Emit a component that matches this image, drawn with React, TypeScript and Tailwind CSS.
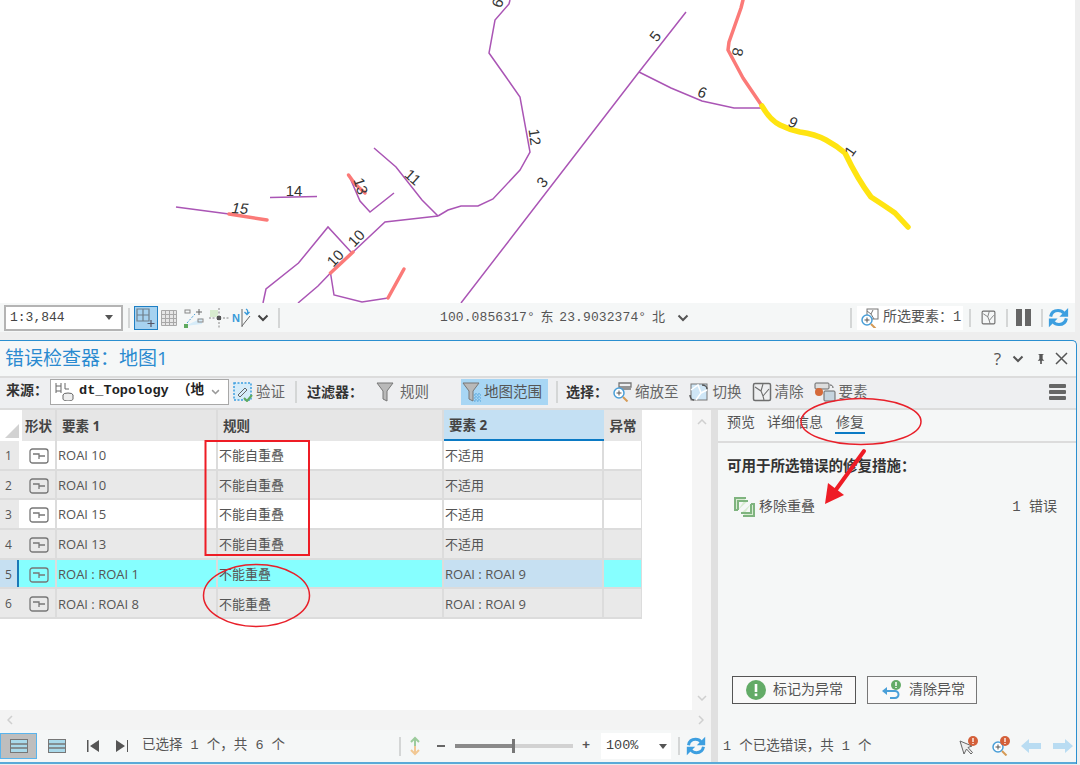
const mono = "font-['Liberation_Mono','Noto_Sans_CJK_SC',monospace]"

const purple = [
  '176,207 229,214',
  '270,197.5 317,196.5',
  '350,178 360,201 370,212 394,193',
  '374,148 396,167 422,200 438,216',
  '438,216 448,210 461,206 478,206 493,199 520,170 530,152 520,97 506,77 489,53 495,20 509,4 510,0',
  '438,216 385,222 353,252',
  '330.5,273 318,286 298,303',
  '351,252 328,227 298.5,263 266,289 263,303',
  '330.5,273 334,295 362,302 388,298',
  '686,12 639,72 461,303',
  '639,72 671,88 702,101 734,108 762,108',
]
const red = [
  '229,214 267,220',
  '348.5,175 355,184 365,193',
  '353,252 330.5,273',
  '388,298 404,269',
  '743,0 741,8 729,42 728,50 743,78 762,106',
]
const labels: [string, number, number, number, boolean?][] = [
  ['9', 498, 3, 110],
  ['12', 535, 137, 82],
  ['3', 542, 182, -50],
  ['5', 655, 36, -52],
  ['6', 702, 92, 10, true],
  ['8', 738, 52, 100],
  ['9', 793, 122, 15, true],
  ['1', 850, 151, -55],
  ['11', 413, 177, 42],
  ['13', 361, 186, 72],
  ['14', 294, 190, 0],
  ['15', 240, 208, 4, true],
  ['10', 356, 238, -46],
  ['10', 335, 258, -46],
]

function MapLines() {
  return (
    <svg className="absolute left-0 top-0 h-[303px] w-[1075px]" viewBox="0 0 1075 303">
      {purple.map((p) => (
        <polyline key={p} points={p} fill="none" stroke="#aa55b5" strokeWidth="1.5" />
      ))}
      {red.map((p) => (
        <polyline key={p} points={p} fill="none" stroke="#fb7a78" strokeWidth="3.5" strokeLinecap="round" strokeLinejoin="round" />
      ))}
      <path
        d="M762 106Q770 120 780 125T800 132Q815 134 826 140T845 153Q858 180 871 197Q885 206 895 213L908 227"
        fill="none"
        stroke="#ffe411"
        strokeWidth="5.5"
        strokeLinecap="round"
        strokeLinejoin="round"
      />
      {labels.map(([t, x, y, r, it]) => (
        <text
          key={t + x}
          x={x}
          y={y}
          transform={`rotate(${r} ${x} ${y})`}
          textAnchor="middle"
          dominantBaseline="central"
          fontSize="15"
          fontStyle={it ? 'italic' : 'normal'}
          fontFamily="'Liberation Sans', sans-serif"
          fill="#333"
        >
          {t}
        </text>
      ))}
    </svg>
  )
}

function Sep({ className = 'h-[22px]' }: { className?: string }) {
  return <span className={`w-[2px] shrink-0 bg-[#d4d6d6] ${className}`} />
}

function Caret() {
  return (
    <svg width="8" height="5" viewBox="0 0 8 5">
      <path d="M0 0h8L4 5z" fill="#555" />
    </svg>
  )
}

function Chevron({ color = '#555', w = 12 }: { color?: string; w?: number }) {
  return (
    <svg width={w} height={(w * 2) / 3} viewBox="0 0 12 8">
      <path d="M1.5 1.5 6 6l4.5-4.5" fill="none" stroke={color} strokeWidth="2" />
    </svg>
  )
}

function Refresh({ size = 24 }: { size?: number }) {
  return (
    <svg width={size} height={size} viewBox="0 0 24 24" fill="none" stroke="#3d9fe0" strokeWidth="3.6">
      <path d="M3 11c.8-4.500 4-7 8.500-7 3 0 5 1 6.500 3" />
      <path d="M21 13c-.8 4.500-4 7-8.500 7-3 0-5-1-6.500-3" />
      <path d="M23 1v10h-10z" fill="#3d9fe0" stroke="none" />
      <path d="M1 23v-10h10z" fill="#3d9fe0" stroke="none" />
    </svg>
  )
}

function Lens({ x = 0, y = 0 }: { x?: number; y?: number }) {
  return (
    <g transform={`translate(${x} ${y})`}>
      <circle cx="7" cy="7" r="5" fill="#fff" stroke="#4a9fd8" strokeWidth="1.5" />
      <path d="M4.500 7h5M7 4.500v5" stroke="#555" strokeWidth="1" />
      <path d="m11 11 4.500 4.500" stroke="#d59a55" strokeWidth="2" />
    </g>
  )
}

function FeatureBox({ s = 20 }: { s?: number }) {
  return (
    <svg width={s} height={s} viewBox="0 0 20 20" fill="none" stroke="#6e6e6e" strokeWidth="1.500">
      <rect x="1.500" y="1.500" width="17" height="17" rx="1.500" />
      <path d="M3 5 9 9 11 2M9 9l2 5 1 4M11 14l6-7" strokeWidth="1.100" />
    </svg>
  )
}

function MapToolbar() {
  return (
    <div className="flex h-[29px] items-center bg-[#f5f7f7]">
      <div className={`ml-1 flex h-[26px] w-[119px] items-center justify-between border-2 border-[#b4b4b4] bg-white pl-1 pr-2 text-[13px] text-[#444] ${mono}`}>
        1:3,844
        <Caret />
      </div>
      <Sep className="ml-[5px] h-[20px]" />
      <div className="ml-[4px] flex h-[24px] w-[24px] items-center justify-center border border-[#1e7fc4] bg-[#a6d2f0]">
        <svg width="20" height="20" viewBox="0 0 20 20" fill="none" stroke="#6f7f8a" strokeWidth="1.200">
          <path d="M1 1h12v12H1zM7 1v12M1 7h12" />
          <path d="M15 12v7M11.500 15.500h7" stroke="#556" />
        </svg>
      </div>
      <svg className="ml-[2px]" width="18" height="18" viewBox="0 0 18 18" fill="#e6e6e6" stroke="#a8a8a8">
        <path d="M1.500 1.500h15v15h-15zM1.500 5.500h15M1.500 9.500h15M1.500 13.500h15M5.500 1.500v15M9.500 1.500v15M13.500 1.500v15" />
      </svg>
      <svg className="ml-[6px]" width="20" height="20" viewBox="0 0 20 20" fill="none">
        <path d="M1 18 18 16V10" fill="#d6ecf9" />
        <rect x="1" y="2" width="5" height="3" stroke="#888" />
        <rect x="14" y="11" width="5" height="3" stroke="#888" />
        <path d="M3 15 11 6" stroke="#4a9fd8" strokeDasharray="2 1.500" />
        <path d="M15 1v6M12 4h6" stroke="#666" />
        <rect x="0" y="16" width="4" height="4" fill="#5faa5f" />
      </svg>
      <svg className="ml-[5px]" width="20" height="20" viewBox="0 0 20 20" fill="none">
        <rect x="1" y="2" width="8" height="7" fill="#d8eccf" />
        <path d="M10 0v20M0 10h20" stroke="#888" strokeDasharray="2 1.500" />
        <rect x="8" y="8" width="4" height="4" fill="#555" />
      </svg>
      <svg className="ml-[3px]" width="22" height="20" viewBox="0 0 22 20" fill="none">
        <text x="0" y="14" fontSize="11" fontWeight="700" fontFamily="'Liberation Sans', sans-serif" fill="#3a9ad9">
          N
        </text>
        <path d="M10 1v18M10 18l8-10" stroke="#666" />
        <path d="M14 1c2 1 2 3 1 5M12.500 4l2.500 2.500L17.500 4" stroke="#3a9ad9" strokeWidth="1.300" />
      </svg>
      <span className="ml-[3px] flex">
        <Chevron color="#444" />
      </span>
      <Sep className="ml-[9px] h-[20px]" />
      <div className={`ml-[160px] flex w-[225px] items-center justify-between text-[13px] tracking-[0.1px] text-[#555] ${mono}`}>
        <span>100.0856317°</span>
        <span>东</span>
        <span>23.9032374°</span>
        <span>北</span>
      </div>
      <span className="ml-[12px] flex">
        <Chevron />
      </span>
      <Sep className="ml-[161px] h-[20px]" />
      <div className={`ml-[5px] flex h-[24px] items-center gap-[4px] bg-white px-[2px] text-[14px] text-[#555] ${mono}`}>
        <svg width="20" height="20" viewBox="0 0 20 20" fill="none">
          <rect x="8" y="1" width="11" height="10" stroke="#777" fill="#fff" />
          <path d="m8 3 4 3 2-4M12 6l3 5" stroke="#777" />
          <Lens x={1} y={5} />
        </svg>
        <span>所选要素：1</span>
      </div>
      <Sep className="ml-[6px] h-[18px]" />
      <span className="ml-[10px] flex">
        <FeatureBox s={15} />
      </span>
      <Sep className="ml-[10px] h-[18px]" />
      <span className="ml-[8px] flex gap-[3px]">
        <span className="h-[17px] w-[6px] bg-[#666]" />
        <span className="h-[17px] w-[6px] bg-[#666]" />
      </span>
      <Sep className="ml-[10px] h-[18px]" />
      <span className="ml-[5px] flex">
        <Refresh size={21} />
      </span>
    </div>
  )
}

function ToolLabel({ children }: { children: string }) {
  return <span className={`text-[14px] font-bold text-[#333] ${mono}`}>{children}</span>
}

function ToolBtn({ icon, label, className = '' }: { icon: React.ReactNode; label: string; className?: string }) {
  return (
    <span className={`flex items-center gap-[3px] text-[14.500px] text-[#666] ${className}`}>
      {icon}
      <span>{label}</span>
    </span>
  )
}

function Funnel({ dotted = false }: { dotted?: boolean }) {
  return (
    <svg width="20" height="22" viewBox="0 0 20 22">
      <path d="M1 2h16l-6 8v10l-4-2v-8z" fill="#b9b9b9" stroke="#777" />
      {dotted && <path d="M12 14h7M12 17h7M12 20h7M14 12v9M17 12v9" stroke="#4a9fd8" strokeDasharray="1.500 1.500" />}
    </svg>
  )
}

function Toolbar() {
  return (
    <div className="flex h-[34px] items-center border-y-2 border-[#dcdcdc] bg-[#eeeff1] pb-[3px] pl-[6px]">
      <ToolLabel>来源：</ToolLabel>
      <div className="ml-[2px] flex h-[26px] w-[179px] items-center justify-between border border-[#a8a8a8] bg-white pl-[3px] pr-[8px]">
        <span className="flex items-center gap-[5px]">
          <svg width="20" height="20" viewBox="0 0 20 20" fill="none" stroke="#666">
            <path d="M2 2v10M7 2v10M2 5h5M2 10h5M11 2v6h4" />
            <ellipse cx="14" cy="14" rx="5" ry="2" fill="#eee" />
            <path d="M9 14v4c0 1 2 2 5 2s5-1 5-2v-4" fill="#eee" />
          </svg>
          <span className={`whitespace-pre text-[13.600px] font-bold text-[#222] ${mono}`}>dt_Topology （地</span>
        </span>
        <Chevron color="#999" w={9} />
      </div>
      <ToolBtn
        className="ml-[4px]"
        label="验证"
        icon={
          <svg width="20" height="20" viewBox="0 0 20 20" fill="none">
            <rect x="1" y="1" width="17" height="17" fill="#d6ecf9" stroke="#3d9fe0" strokeDasharray="2 1.500" strokeWidth="1.500" />
            <path d="m5 13 7-7 2 2-7 7z" stroke="#666" />
            <path d="m11 16 3 3 5-6" stroke="#5faa5f" strokeWidth="2" />
          </svg>
        }
      />
      <Sep className="ml-[10px] h-[22px]" />
      <span className="ml-[10px]">
        <ToolLabel>过滤器：</ToolLabel>
      </span>
      <ToolBtn className="ml-[13px] gap-[4px]" label="规则" icon={<Funnel />} />
      <span className="ml-[32px] flex h-[26px] w-[87px] items-center gap-[2px] bg-[#a8d6f4] pl-[1px] text-[14.500px] text-[#555]">
        <Funnel dotted />
        <span className="whitespace-nowrap">地图范围</span>
      </span>
      <Sep className="ml-[8px] h-[22px]" />
      <span className="ml-[8px]">
        <ToolLabel>选择：</ToolLabel>
      </span>
      <ToolBtn
        className="ml-[4px]"
        label="缩放至"
        icon={
          <svg width="20" height="20" viewBox="0 0 20 20" fill="none">
            <path d="M7 1h12v4H7zM7 7h12" stroke="#777" strokeWidth="1.300" />
            <Lens x={0} y={4} />
          </svg>
        }
      />
      <ToolBtn
        className="ml-[10px] gap-[4px]"
        label="切换"
        icon={
          <svg width="20" height="20" viewBox="0 0 20 20" fill="none">
            <rect x="2" y="2" width="16" height="16" fill="#cfe6f6" stroke="#777" />
            <path d="M2 8 9 3l3 8-5 7M12 11l6-3" stroke="#fff" strokeWidth="1.500" />
            <path d="M13 3c3 0 5 2 5 4M1 13c0 3 2 5 4 5" stroke="#555" strokeWidth="1.500" />
          </svg>
        }
      />
      <ToolBtn className="ml-[10px]" label="清除" icon={<FeatureBox />} />
      <ToolBtn
        className="ml-[10px] gap-[2px]"
        label="要素"
        icon={
          <svg width="22" height="20" viewBox="0 0 22 20" fill="none">
            <rect x="1" y="1" width="14" height="6" rx="1" fill="#ddd" stroke="#666" />
            <rect x="10" y="9" width="11" height="10" rx="1" fill="#c6d4de" stroke="#666" />
            <circle cx="5" cy="10" r="4" fill="#d56a3a" />
            <path d="M16 3c2 0 3 1 3 3" stroke="#555" />
          </svg>
        }
      />
      <span className="ml-auto mr-[10px] flex flex-col gap-[2px]">
        <span className="h-[4px] w-[17px] rounded-[1px] bg-[#666]" />
        <span className="h-[4px] w-[17px] rounded-[1px] bg-[#666]" />
        <span className="h-[4px] w-[17px] rounded-[1px] bg-[#666]" />
      </span>
    </div>
  )
}

function ShapeIcon() {
  return (
    <svg width="20" height="16" viewBox="0 0 20 16" fill="none" stroke="#777">
      <rect x="1" y="1" width="18" height="14" rx="2.500" strokeWidth="1.300" />
      <path d="M4 6h6v5M10 8h6" strokeWidth="1.300" />
    </svg>
  )
}

const rows = [
  { id: 1, a: 'ROAI 10', rule: '不能自重叠', b: '不适用', bg: 'bg-white' },
  { id: 2, a: 'ROAI 10', rule: '不能自重叠', b: '不适用', bg: 'bg-[#e9e9e9]' },
  { id: 3, a: 'ROAI 15', rule: '不能自重叠', b: '不适用', bg: 'bg-white' },
  { id: 4, a: 'ROAI 13', rule: '不能自重叠', b: '不适用', bg: 'bg-[#e9e9e9]' },
  { id: 5, a: 'ROAI : ROAI 1', rule: '不能重叠', b: 'ROAI : ROAI 9', bg: 'bg-[#86ffff]' },
  { id: 6, a: 'ROAI : ROAI 8', rule: '不能重叠', b: 'ROAI : ROAI 9', bg: 'bg-[#e9e9e9]' },
]

const headCell = 'flex h-full items-center border-r-2 border-[#dcdcdc] pt-[2px] text-[13.500px] font-bold text-[#444]'

function ErrorTable() {
  return (
    <div className="relative flex min-w-0 flex-1 flex-col">
      <div className="flex h-[31px] w-[642px] bg-[#e6e6e6]">
        <div className="flex w-[22px] items-end justify-end bg-white pb-[3px] pr-[3px]">
          <svg width="14" height="14" viewBox="0 0 14 14">
            <path d="M14 0v14H0z" fill="#d2d2d2" />
          </svg>
        </div>
        <div className={`${headCell} w-[35px] justify-center`}>形状</div>
        <div className={`${headCell} w-[161px] pl-[5px]`}>要素 1</div>
        <div className={`${headCell} w-[226px] pl-[5px]`}>规则</div>
        <div className="flex h-full w-[160px] items-center border-b-2 border-[#0b7ac4] bg-[#c4e0f3] pl-[5px] pt-[2px] text-[13.500px] font-bold text-[#444]">
          要素 2
        </div>
        <div className="flex h-full w-[38px] items-center justify-center pt-[2px] text-[13.500px] font-bold text-[#444]">异常</div>
      </div>
      {rows.map((r) => (
        <div key={r.id} className={`flex h-[29.700px] w-[642px] border-b-2 border-[#dcdcdc] text-[13px] text-[#555] ${r.bg}`}>
          <div
            className={`flex w-[19px] items-center pl-[5px] pt-[2px] text-[12px] ${
              r.id === 5 ? 'border-r-2 border-[#1b78b8] bg-[#c6e0f2]' : 'bg-[#e9e9e9]'
            }`}
          >
            {r.id}
          </div>
          <div className="flex w-[38px] items-center justify-center border-r-2 border-[#dcdcdc] pl-[3px] pt-[2px]">
            <ShapeIcon />
          </div>
          <div className="flex w-[161px] items-center border-r-2 border-[#dcdcdc] pl-[1px] pt-[2px]">{r.a}</div>
          <div className="flex w-[226px] items-center border-r-2 border-[#dcdcdc] pl-[1px] pt-[2px]">{r.rule}</div>
          <div className={`flex w-[160px] items-center border-r-2 border-[#dcdcdc] pl-[1px] pt-[2px] ${r.id === 5 ? 'bg-[#c6e0f2]' : ''}`}>{r.b}</div>
          <div className={`w-[38px] border-r border-[#dcdcdc] ${r.id === 2 || r.id === 4 || r.id === 6 ? 'bg-[#e9e9e9]' : ''}`} />
        </div>
      ))}
      <div className="absolute bottom-[20px] right-0 top-0 flex w-[19px] flex-col items-center justify-between bg-[#f5f5f5] py-[9px] text-[#cfcfcf]">
        <svg width="10" height="6" viewBox="0 0 10 6" fill="none" stroke="currentColor" strokeWidth="1.500">
          <path d="m1 5 4-4 4 4" />
        </svg>
        <svg width="10" height="6" viewBox="0 0 10 6" fill="none" stroke="currentColor" strokeWidth="1.500">
          <path d="m1 1 4 4 4-4" />
        </svg>
      </div>
      <div className="absolute bottom-0 left-0 right-0 flex h-[20px] items-center justify-between bg-[#f3f3f3] px-[7px] text-[#cfcfcf]">
        <svg width="6" height="10" viewBox="0 0 6 10" fill="none" stroke="currentColor" strokeWidth="1.500">
          <path d="M5 1 1 5l4 4" />
        </svg>
        <svg width="6" height="10" viewBox="0 0 6 10" fill="none" stroke="currentColor" strokeWidth="1.500">
          <path d="m1 1 4 4-4 4" />
        </svg>
      </div>
    </div>
  )
}

function FixPane() {
  return (
    <div className="flex w-[358px] shrink-0 flex-col">
      <div className="flex h-[31px] gap-[12px] pl-[9px] pt-[1px] text-[14px] text-[#555]">
        <span>预览</span>
        <span>详细信息</span>
        <span className="h-[23px] border-b-2 border-[#0b7ac4] px-[1px]">修复</span>
      </div>
      <div className="flex min-h-0 flex-1 flex-col border-t-2 border-[#dcdcdc] pl-[9px]">
        <div className={`mt-[14px] text-[14.500px] font-bold text-[#333] ${mono}`}>可用于所选错误的修复措施：</div>
        <div className={`mt-[18px] flex items-center pl-[7px] pr-[19px] text-[14px] text-[#555] ${mono}`}>
          <svg width="21" height="20" viewBox="0 0 21 20" fill="none" stroke="#7fb47f" strokeWidth="2">
            <path d="M12 1H1v12h3M4 13V4h10" fill="#d8ecd2" />
            <path d="M9 19h11V7h-3M17 7v9H7" fill="#d8ecd2" />
          </svg>
          <span className="ml-[4px]">移除重叠</span>
          <span className="ml-auto">1 错误</span>
        </div>
        <div className="mb-[26px] ml-[5px] mt-auto flex gap-[11px] text-[14px] text-[#555]">
          <div className="flex h-[28px] w-[124px] items-center gap-[7px] border border-[#555] bg-[#f9f9f9] pl-[13px]">
            <svg width="20" height="20" viewBox="0 0 20 20">
              <circle cx="10" cy="10" r="10" fill="#63ab67" />
              <rect x="8.700" y="4" width="2.600" height="8" fill="#fff" />
              <rect x="8.700" y="13.500" width="2.600" height="2.600" fill="#fff" />
            </svg>
            <span className="pb-[3px]">标记为异常</span>
          </div>
          <div className="flex h-[28px] w-[110px] items-center gap-[6px] border border-[#777] bg-[#f9f9f9] pl-[13px]">
            <svg width="22" height="20" viewBox="0 0 22 20" fill="none">
              <path d="M5 11h9a3.500 3.500 0 0 1 0 7H9" stroke="#4a9fd8" strokeWidth="2" />
              <path d="M6 7 1 11l5 4z" fill="#4a9fd8" />
              <circle cx="15" cy="5" r="5" fill="#63ab67" />
              <path d="M15 2v4M15 7v1" stroke="#fff" strokeWidth="1.500" />
            </svg>
            <span className="pb-[3px]">清除异常</span>
          </div>
        </div>
      </div>
    </div>
  )
}

function BadgeDot() {
  return (
    <g>
      <circle cx="15" cy="5" r="5" fill="#d4603a" />
      <path d="M15 2v4M15 7v1" stroke="#fff" strokeWidth="1.300" />
    </g>
  )
}

function RowsIcon() {
  return (
    <svg width="18" height="14" viewBox="0 0 18 14">
      <rect x=".5" y=".5" width="17" height="13" fill="#a9d9ea" stroke="#777" />
      <path d="M1 5h16M1 9h16" stroke="#777" strokeWidth="1.500" />
    </svg>
  )
}

function BottomBar() {
  return (
    <div className={`flex h-[34px] items-center border-b-2 border-[#5aaad8] bg-[#f5f7f7] text-[13.500px] text-[#555] ${mono}`}>
      <div className="flex h-full w-[711px] shrink-0 items-center">
        <div className="flex h-[26px] w-[37px] items-center justify-center border border-[#5ab4ec] bg-[#bebebe]">
          <RowsIcon />
        </div>
        <span className="ml-[11px] flex">
          <RowsIcon />
        </span>
        <svg className="ml-[21px]" width="13" height="12" viewBox="0 0 13 12" fill="#555">
          <path d="M0 0h1.500v12H0zM12 0v12L3 6z" />
        </svg>
        <svg className="ml-[15px]" width="13" height="12" viewBox="0 0 13 12" fill="#555">
          <path d="M12 0h1.500v12H12zM1 0v12l9-6z" />
        </svg>
        <span className="ml-[14px] w-[145px] whitespace-nowrap pt-[1px]">已选择 1 个，共 6 个</span>
        <Sep className="ml-[112px] h-[19px]" />
        <svg className="ml-[7px]" width="14" height="20" viewBox="0 0 14 20" fill="none" strokeWidth="2">
          <path d="M7 10V2M3 6l4-4 4 4" stroke="#9ccb9c" />
          <path d="M7 10v8M3 14l4 4 4-4" stroke="#f2c894" />
        </svg>
        <span className="ml-[15px] h-[2px] w-[8px] bg-[#666]" />
        <div className="relative ml-[10px] h-[4px] w-[118px] bg-[#d2d2d2]">
          <span className="absolute left-0 top-0 h-[4px] w-[58px] bg-[#8a8a8a]" />
          <span className="absolute -top-[5px] left-[57px] h-[14px] w-[3px] bg-[#777]" />
        </div>
        <span className="ml-[9px] w-[10px] font-bold text-[#555]">+</span>
        <div className="ml-[9px] flex h-[26px] w-[70px] items-center justify-between bg-white pl-[5px] pr-[4px] text-[#444]">
          100%
          <Caret />
        </div>
        <Sep className="ml-[7px] h-[18px]" />
        <span className="ml-[6px] flex">
          <Refresh size={20} />
        </span>
      </div>
      <span className="h-full w-[7px] shrink-0 bg-[#e0e0e0]" />
      <span className="ml-[5px] whitespace-nowrap pt-[2px]">1 个已选错误，共 1 个</span>
      <svg className="ml-auto" width="20" height="20" viewBox="0 0 20 20" fill="none">
        <path d="m2 5 4 13 2.500-5 4.500 5 1.500-1.500-4.500-5 4-1.500z" fill="#eee" stroke="#666" />
        <BadgeDot />
      </svg>
      <svg className="ml-[12px]" width="20" height="20" viewBox="0 0 20 20" fill="none">
        <Lens x={1} y={4} />
        <BadgeDot />
      </svg>
      <svg className="ml-[11px]" width="20" height="14" viewBox="0 0 20 14">
        <path d="M0 7 8 0v4h12v6H8v4z" fill="#b9dcf2" />
      </svg>
      <svg className="ml-[12px] mr-[3px]" width="20" height="14" viewBox="0 0 20 14">
        <path d="M20 7 12 0v4H0v6h12v4z" fill="#b9dcf2" />
      </svg>
    </div>
  )
}

function Annotations() {
  return (
    <svg className="pointer-events-none absolute left-0 top-0 h-[765px] w-[1080px]" viewBox="0 0 1080 765" fill="none">
      <rect x="205.500" y="441" width="103.500" height="114" stroke="#ee1c25" strokeWidth="2" />
      <ellipse cx="256.500" cy="595.500" rx="53" ry="31" stroke="#e8202a" strokeWidth="1.500" />
      <ellipse cx="861" cy="421.500" rx="60" ry="23" stroke="#e8202a" strokeWidth="1.500" />
      <path d="M864 451 835 491" stroke="#ee1c25" strokeWidth="4" strokeLinecap="round" />
      <path d="M825 504 828 483 844 495z" fill="#ee1c25" />
    </svg>
  )
}

export default function App() {
  return (
    <div className="relative h-[765px] w-[1080px] overflow-hidden bg-[#eeeeee] font-['Open_Sans','Noto_Sans_CJK_SC',sans-serif]">
      <div className="w-[1075px]">
        <div className="relative h-[303px] bg-white">
          <MapLines />
        </div>
        <MapToolbar />
      </div>
      <div className="mt-[8px] flex h-[424px] w-[1077px] flex-col overflow-hidden rounded-tr-[5px] border-r border-t border-[#2a8fd0] bg-[#f5f7f7]">
        <div className="flex h-[35px] shrink-0 items-center pl-[5px] pr-[8px]">
          <span className="text-[19px] text-[#2a8ad0]">错误检查器：地图1</span>
          <span className="ml-auto text-[17px] leading-none text-[#555]">?</span>
          <span className="ml-[11px] flex">
            <Chevron />
          </span>
          <svg className="ml-[12px]" width="10" height="14" viewBox="0 0 12 14" fill="#555">
            <path d="M3 1h6v1H8v5l2 2H7v4H5V9H2l2-2V2H3z" />
          </svg>
          <svg className="ml-[9px]" width="13" height="13" viewBox="0 0 13 13" fill="none" stroke="#555" strokeWidth="1.500">
            <path d="m1 1 11 11M12 1 1 12" />
          </svg>
        </div>
        <Toolbar />
        <div className="flex min-h-0 flex-1">
          <div className="flex min-w-0 flex-1 bg-white">
            <ErrorTable />
          </div>
          <div className="w-[7px] shrink-0 bg-[#e0e0e0]" />
          <FixPane />
        </div>
        <BottomBar />
      </div>
      <Annotations />
    </div>
  )
}
